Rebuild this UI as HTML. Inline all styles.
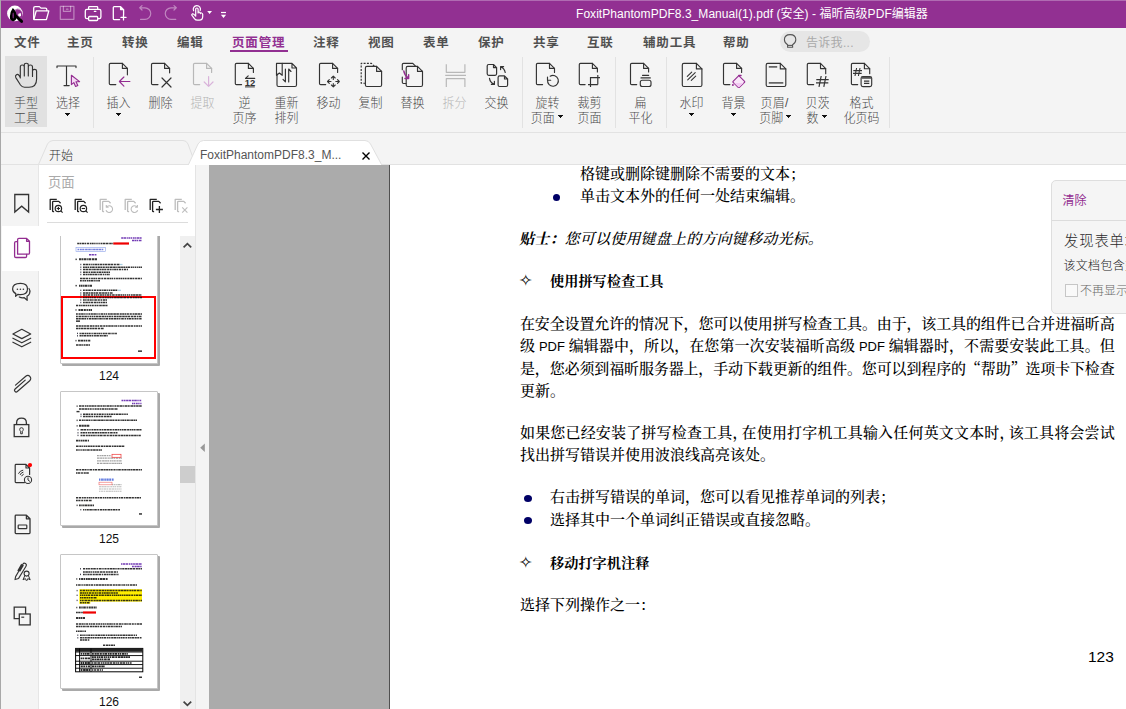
<!DOCTYPE html>
<html lang="zh-CN">
<head>
<meta charset="utf-8">
<title>FoxitPhantomPDF8.3_Manual(1).pdf (安全) - 福昕高级PDF编辑器</title>
<style>
*{box-sizing:border-box;margin:0;padding:0}
html,body{width:1126px;height:709px;overflow:hidden;background:#f4f4f4}
body{position:relative;font-family:"Liberation Sans","Noto Sans CJK SC",sans-serif;font-size:12px;color:#555}
.abs{position:absolute}
svg{position:absolute;overflow:visible}
/* title bar */
#title{position:absolute;left:0;top:0;width:1126px;height:28px;background:#923092;border-top:1px solid #b06bb2}
#title .ttl{position:absolute;left:576px;top:5px;color:#fff;font-size:12px;line-height:16px;white-space:nowrap;letter-spacing:0.05px}
#lborder{position:absolute;left:0;top:0;width:1px;height:709px;background:#a8a8a8;z-index:50}
/* menu */
#menu{position:absolute;left:0;top:28px;width:1126px;height:27px}
#menu span{position:absolute;top:6px;font-size:12.5px;line-height:18px;font-weight:700;color:#505050;white-space:nowrap;letter-spacing:0.85px}
#menu span.act{color:#923092}
/* ribbon */
#ribbon{position:absolute;left:0;top:55px;width:1126px;height:78px;border-bottom:1px solid #e2e2e2}
.rb{transform:scaleY(1.05);transform-origin:50% 0;position:absolute;top:39.8px;width:60px;margin-left:-30px;text-align:center;font-size:12px;line-height:15px;color:#4a4a4a;font-weight:300;white-space:nowrap}
.rb.dis{color:#b4b4b4}
.sep{position:absolute;top:2px;width:1px;height:71px;background:#e2e2e2}
.dd{position:absolute;width:0;height:0;border-left:2.7px solid transparent;border-right:2.7px solid transparent;border-top:3.2px solid #1a1a1a}

/* tab bar */
#tabline{position:absolute;left:0;top:164px;width:1126px;height:1px;background:#e2e2e2}
.tabtxt{position:absolute;top:147px;font-size:12px;line-height:16px;white-space:nowrap}
/* left strip */
#strip{position:absolute;left:1px;top:165px;width:38px;height:544px;background:#f4f4f4;border-right:1px solid #e6e6e6}
#stripact{position:absolute;left:2px;top:226px;width:38px;height:45px;background:#fff}
#panel{position:absolute;left:39px;top:165px;width:156px;height:544px;background:#fff}
#panel .hd{position:absolute;left:9px;top:9px;font-size:13.33px;line-height:18px;color:#aaa}
#panel .ln{position:absolute;left:8px;top:57px;width:141px;height:1px;background:#dcdcdc}
#thumbs{position:absolute;left:0;top:71px;width:141px;height:473px;overflow:hidden}
.th{position:absolute;left:21px;width:98px;height:135px;background:#fff;border:1px solid #c6c6c6;border-radius:1px;box-shadow:2px 2px 0 #a9a9a9}
.thl{position:absolute;left:20px;width:100px;text-align:center;font-size:12px;line-height:14px;color:#111}
#sbar{position:absolute;left:141px;top:71px;width:15px;height:473px;background:#f0f0f0}
#sthumb{position:absolute;left:0;top:230px;width:15px;height:17px;background:#cdcdcd}
#gutter{position:absolute;left:195px;top:165px;width:14px;height:544px;background:#f4f4f4;border-left:1px solid #e4e4e4}
#gray{position:absolute;left:209px;top:165px;width:181px;height:544px;background:#ababab;border-right:1px solid #505050}
#page{position:absolute;left:390px;top:165px;width:736px;height:544px;background:#fff;overflow:hidden;font-family:"Liberation Serif","Noto Serif CJK SC",serif;color:#000;font-size:15px;font-weight:500}
#page .l{position:absolute;white-space:nowrap;line-height:22px;height:22px}
#page .j{text-align:justify;text-align-last:justify;width:594.5px;left:130px;letter-spacing:-0.25px}
#page .bl{position:absolute;width:8px;height:7px;border-radius:50%;background:#000066}
#page .hd{font-weight:700;font-size:14.2px}
#page .en{font-family:"Liberation Sans",sans-serif;font-size:13px;letter-spacing:0}
#page .hc{margin-right:-6px}
#page .cj{font-family:"Noto Serif CJK SC",serif}

#pop{position:absolute;left:1051px;top:180px;width:90px;height:134px;background:#f5f5f5;border:1px solid #dedede;border-radius:5px;font-family:"Liberation Sans","Noto Sans CJK SC",sans-serif;overflow:hidden}
#pop div{position:absolute;white-space:nowrap}
</style>
</head>
<body>
<div id="title">
  <div class="ttl">FoxitPhantomPDF8.3_Manual(1).pdf (安全) - 福昕高级PDF编辑器</div>
</div>
<div id="menu">
  <span style="left:14px">文件</span>
  <span style="left:67px">主页</span>
  <span style="left:122px">转换</span>
  <span style="left:177px">编辑</span>
  <span class="act" style="left:232px">页面管理</span>
  <span style="left:313px">注释</span>
  <span style="left:368px">视图</span>
  <span style="left:423px">表单</span>
  <span style="left:478px">保护</span>
  <span style="left:533px">共享</span>
  <span style="left:587px">互联</span>
  <span style="left:643px">辅助工具</span>
  <span style="left:723px">帮助</span>
  <div class="abs" style="left:230px;top:21.5px;width:58px;height:2.5px;background:#923092"></div>
  <div class="abs" style="left:780px;top:3px;width:90px;height:21px;border-radius:11px;background:#e6e6e6"></div>
  <span style="left:806px;top:6px;font-size:12px;font-weight:400;color:#aaa;letter-spacing:0.3px">告诉我...</span>
</div>
<div id="ribbon">
  <div class="abs" style="left:5px;top:1px;width:42px;height:71px;background:#e1e1e1"></div>
  <div class="rb" style="left:26px">手型<br>工具</div>
  <div class="rb" style="left:68px">选择</div>
  <div class="sep" style="left:93px"></div>
  <div class="rb" style="left:118.5px">插入</div>
  <div class="rb" style="left:160.5px">删除</div>
  <div class="rb dis" style="left:202.5px">提取</div>
  <div class="rb" style="left:244.5px">逆<br>页序</div>
  <div class="rb" style="left:286.5px">重新<br>排列</div>
  <div class="rb" style="left:328.5px">移动</div>
  <div class="rb" style="left:370.5px">复制</div>
  <div class="rb" style="left:412.5px">替换</div>
  <div class="rb dis" style="left:454.5px">拆分</div>
  <div class="rb" style="left:496.5px">交换</div>
  <div class="sep" style="left:522px"></div>
  <div class="rb" style="left:547.5px">旋转</div><div class="rb" style="left:542.8px;top:54.7px">页面</div>
  <div class="rb" style="left:589.5px">裁剪<br>页面</div>
  <div class="sep" style="left:615px"></div>
  <div class="rb" style="left:640.5px">扁<br>平化</div>
  <div class="sep" style="left:666px"></div>
  <div class="rb" style="left:691.5px">水印</div>
  <div class="rb" style="left:733.6px">背景</div>
  <div class="rb" style="left:774.5px;letter-spacing:0.3px">页眉/</div><div class="rb" style="left:771.3px;top:54.7px">页脚</div>
  <div class="rb" style="left:817.5px">贝茨</div><div class="rb" style="left:812.4px;top:54.7px">数</div>
  <div class="rb" style="left:861.5px">格式<br>化页码</div>
  <div class="sep" style="left:889px"></div>
</div>

<!-- tab bar -->
<svg style="left:0;top:139px" width="400" height="27" viewBox="0 0 400 27">
  <path d="M38.5 25.5 L47.5 5 Q49.5 1.5 53 1.5 L183 1.5 Q186.5 1.5 188 5 L195.5 25.5" fill="#f4f4f4" stroke="#e0e0e0" stroke-width="1"/>
  <path d="M188.5 25.5 L198 5 Q200 1.5 203.5 1.5 L365 1.5 Q368.5 1.5 370.5 5 L381.5 25.5 Z" fill="#fff" stroke="#e0e0e0" stroke-width="1"/>
  <path d="M362.5 13.5 L369.5 20.5 M369.5 13.5 L362.5 20.5" stroke="#000" stroke-width="1.4" fill="none"/>
</svg>
<div id="tabline"></div>
<div class="abs" style="left:189px;top:164px;width:192px;height:1px;background:#fff"></div>
<div class="tabtxt" style="left:49px;top:148px;color:#333;font-weight:300">开始</div>
<div class="tabtxt" style="left:200px;color:#555">FoxitPhantomPDF8.3_M...</div>

<div id="strip"></div>
<div id="stripact"></div>
<div id="panel">
  <div class="hd">页面</div>
  <div class="ln"></div>
  <div id="thumbs">
    <div class="th" style="top:-7px"></div>
    <div class="abs" style="left:22px;top:60px;width:95px;height:63px;border:2px solid #f00"></div>
    <div class="thl" style="top:133px">124</div>
    <div class="th" style="top:155px"></div>
    <div class="thl" style="top:296px">125</div>
    <div class="th" style="top:318px"></div>
    <div class="thl" style="top:459px">126</div>
  </div>
  <div id="sbar"><div id="sthumb"></div></div>
</div>
<div id="gutter"></div>
<div id="gray"></div>
<div id="page">
  <div class="l" style="left:190px;top:-2.5px">格键或删除键删除不需要的文本；</div>
  <div class="bl" style="left:163.3px;top:28.7px;width:7px"></div>
  <div class="l" style="left:190px;top:20px">单击文本外的任何一处结束编辑。</div>
  <div class="l" style="left:129px;top:62.5px;font-style:italic;letter-spacing:0.2px"><b>贴士：</b>您可以使用键盘上的方向键移动光标。</div>
  <div class="l hd" style="left:130px;top:104.6px;left:128.7px;font-weight:400;font-size:16.5px;font-family:'DejaVu Sans',sans-serif">✧</div>
  <div class="l hd" style="left:160px;top:105px">使用拼写检查工具</div>
  <div class="l j" style="top:148px">在安全设置允许的情况下，您可以使用拼写检查工具。由于，该工具的组件已合并进福昕高</div>
  <div class="l j" style="top:170px">级 <span class="en">PDF</span> 编辑器中，所以，在您第一次安装福昕高级 <span class="en">PDF</span> 编辑器时，不需要安装此工具。但</div>
  <div class="l j" style="top:192px">是，您必须到福昕服务器上，手动下载更新的组件。您可以到程序的<span class="cj">“</span>帮助<span class="cj">”</span>选项卡下检查</div>
  <div class="l" style="left:130px;top:215px">更新。</div>
  <div class="l j" style="top:257px">如果您已经安装了拼写检查工具<span class="hc">，</span>在使用打字机工具输入任何英文文本时<span class="hc">，</span>该工具将会尝试</div>
  <div class="l" style="left:130px;top:279px">找出拼写错误并使用波浪线高亮该处。</div>
  <div class="bl" style="left:134px;top:330px"></div>
  <div class="l" style="left:160px;top:321px">右击拼写错误的单词，您可以看见推荐单词的列表；</div>
  <div class="bl" style="left:134px;top:352px"></div>
  <div class="l" style="left:160px;top:344px">选择其中一个单词纠正错误或直接忽略。</div>
  <div class="l hd" style="left:130px;top:386.6px;left:128.7px;font-weight:400;font-size:16.5px;font-family:'DejaVu Sans',sans-serif">✧</div>
  <div class="l hd" style="left:160px;top:387px">移动打字机注释</div>
  <div class="l" style="left:130px;top:429px">选择下列操作之一：</div>
  <div class="l" style="left:699px;top:481px;font-family:'Liberation Sans',sans-serif;font-size:15.5px;left:698px">123</div>
</div>
<svg id="rbicons" style="left:0;top:0" width="1126" height="140" viewBox="0 0 1126 140"><g fill="none" stroke="#333" stroke-width="1.15" stroke-linecap="round" stroke-linejoin="round">
<path d="M20.3 78 L20.3 67 Q20.3 65 22.3 65 Q24.3 65 24.3 67 L24.3 76 M24.3 67 L24.3 65 Q24.3 63.2 26.3 63.2 Q28.3 63.2 28.3 65 L28.3 76 M28.3 67 Q28.3 65 30.4 65 Q32.5 65 32.5 67 L32.5 76.5 M32.5 71 Q32.5 69.3 34.6 69.3 Q36.6 69.3 36.6 71 L36.6 79 Q36.6 87.2 29 87.2 L24.5 87.2 Q22 87.2 20.5 85 L15.8 77.6 Q14.9 75.8 16.4 74.7 Q17.8 73.8 19 75.3 L20.3 77.6"/>
<path d="M57 67.6 L57 66 L76 66 L76 67.6 M66.5 66 L66.5 85.6 M64 85.6 L69.2 85.6"/>
<path d="M115.8 84.6 L110.5 84.6 Q109.3 84.6 109.3 83.4 L109.3 64.6 Q109.3 63.4 110.5 63.4 L122.4 63.4 L127.4 68.4 L127.4 74.8"/><path d="M122.4 63.4 L122.4 68.4 L127.4 68.4"/>
<path d="M158.0 84.6 L152.7 84.6 Q151.5 84.6 151.5 83.4 L151.5 64.6 Q151.5 63.4 152.7 63.4 L164.6 63.4 L169.6 68.4 L169.6 72.8"/><path d="M164.6 63.4 L164.6 68.4 L169.6 68.4"/>
<path d="M162 78 L171 87 M171 78 L162 87" stroke-width="1.2"/>
<path d="M241.6 84.6 L236.5 84.6 Q235.3 84.6 235.3 83.4 L235.3 64.6 Q235.3 63.4 236.5 63.4 L248.4 63.4 L253.4 68.4 L253.4 72.5"/><path d="M248.4 63.4 L248.4 68.4 L253.4 68.4"/>
<path d="M254.7 78.4 L245.5 78.4 M248.2 75.8 L245.5 78.4"/>
<path d="M282.2 63.4 L292 63.4 L296.5 68 L296.5 85 Q296.5 86.5 295 86.5 L278.5 86.5 Q277 86.5 277 85 L277 74 M292 63.4 L292 68 L296.5 68"/>
<path d="M276.5 63.4 L282.2 63.4 L282.2 75.3 L279.4 73 L276.5 75.3 Z"/>
<path d="M285.4 69 L285.4 81.8 L283 79.3 M288.7 82 L288.7 69 L291 71.5"/>
<path d="M325.7 84.6 L320.7 84.6 Q319.5 84.6 319.5 83.4 L319.5 64.6 Q319.5 63.4 320.7 63.4 L332.6 63.4 L337.6 68.4 L337.6 72.5"/><path d="M332.6 63.4 L332.6 68.4 L337.6 68.4"/>
<path d="M333.3 76.3 L333.3 79.5 M331.4 78 L333.3 76.2 L335.2 78 M333.3 86.8 L333.3 83.5 M331.4 85 L333.3 86.8 L335.2 85 M327.5 81.5 L331 81.5 M329.3 79.6 L327.5 81.5 L329.3 83.4 M339.3 81.5 L335.8 81.5 M337.5 79.6 L339.3 81.5 L337.5 83.4" stroke-width="1.1"/>
<path d="M365.4 83.2 L361.2 83.2 L361.2 63.4 L371.5 63.4 L374.3 66.2" stroke-dasharray="2 1.3" stroke-linecap="butt"/>
<path d="M366.9 66.4 L376.6 66.4 L381.6 71.4 L381.6 85.0 Q381.6 86.5 380.1 86.5 L366.9 86.5 Q365.4 86.5 365.4 85.0 L365.4 67.9 Q365.4 66.4 366.9 66.4 Z"/><path d="M376.6 66.4 L376.6 71.4 L381.6 71.4"/>
<path d="M402.3 69.7 L402.3 64.6 Q402.3 63.4 403.5 63.4 L412.8 63.4 L415.5 66.2 M402.3 77 L402.3 82.3 Q402.3 83.5 403.5 83.5 L406 83.5"/>
<path d="M407.7 66.4 L417.5 66.4 L422.5 71.4 L422.5 85.0 Q422.5 86.5 421.0 86.5 L407.7 86.5 Q406.2 86.5 406.2 85.0 L406.2 67.9 Q406.2 66.4 407.7 66.4 Z"/><path d="M417.5 66.4 L417.5 71.4 L422.5 71.4"/>
<path d="M488.7 64.5 L493.5 64.5 L496.6 67.6 L496.6 73.8 Q496.6 75.3 495.1 75.3 L488.7 75.3 Q487.2 75.3 487.2 73.8 L487.2 66 Q487.2 64.5 488.7 64.5 Z M493.5 64.5 L493.5 67.6 L496.6 67.6" stroke-width="1.2"/>
<path d="M499.6 75.9 L504.5 75.9 L507.6 79 L507.6 85 Q507.6 86.5 506.1 86.5 L499.6 86.5 Q498.1 86.5 498.1 85 L498.1 77.4 Q498.1 75.9 499.6 75.9 Z M504.5 75.9 L504.5 79 L507.6 79" stroke-width="1.2"/>
<path d="M505.2 72.5 Q504.6 68.5 500.8 66.7 M500.6 69.6 L500.6 66.6 L503.6 66.6 M489.5 78.4 Q490 82.6 494.2 84.3 M494.4 81.3 L494.4 84.4 L491.4 84.4" stroke-width="1.2"/>
<path d="M542.6 84.6 L537.6 84.6 Q536.4 84.6 536.4 83.4 L536.4 64.6 Q536.4 63.4 537.6 63.4 L549.5 63.4 L554.5 68.4 L554.5 72.5"/><path d="M549.5 63.4 L549.5 68.4 L554.5 68.4"/>
<path d="M550.2 76.2 A5.4 5.4 0 1 1 547.6 80.2 M547.5 77 L547.5 80.2 L550.7 80.2"/>
<path d="M585.1 84.6 L580.5 84.6 Q579.3 84.6 579.3 83.4 L579.3 64.6 Q579.3 63.4 580.5 63.4 L592.4 63.4 L597.4 68.4 L597.4 72"/><path d="M592.4 63.4 L592.4 68.4 L597.4 68.4"/>
<path d="M590.5 77 L590.5 86.9 M588 84.6 L597.8 84.6 M590.5 77.6 L600 77.6 M597.8 75 L597.8 84.6" stroke-linecap="butt"/>
<path d="M636.7 84.6 L631.7 84.6 Q630.5 84.6 630.5 83.4 L630.5 64.6 Q630.5 63.4 631.7 63.4 L643.6 63.4 L648.6 68.4 L648.6 72"/><path d="M643.6 63.4 L643.6 68.4 L648.6 68.4"/>
<path d="M642.5 75.3 L648.7 75.3 M641 77.9 L650.3 77.9"/>
<rect x="640.3" y="80.2" width="10.7" height="6.3" rx="2"/>
<path d="M683.8 63.4 L696.4 63.4 L701.9 68.9 L701.9 85.0 Q701.9 86.5 700.4 86.5 L683.8 86.5 Q682.3 86.5 682.3 85.0 L682.3 64.9 Q682.3 63.4 683.8 63.4 Z"/><path d="M696.4 63.4 L696.4 68.9 L701.9 68.9"/>
<path d="M687.3 76.4 L691.7 72.2 M687.7 79.8 L695.2 72.6 M691.3 80.3 L695.7 76.2" stroke-width="1.1"/>
<path d="M729.9 84.6 L724.7 84.6 Q723.5 84.6 723.5 83.4 L723.5 64.6 Q723.5 63.4 724.7 63.4 L736.6 63.4 L741.6 68.4 L741.6 72.5"/><path d="M736.6 63.4 L736.6 68.4 L741.6 68.4"/>
<path d="M767.7 63.4 L780.3 63.4 L785.8 68.9 L785.8 85.0 Q785.8 86.5 784.3 86.5 L767.7 86.5 Q766.2 86.5 766.2 85.0 L766.2 64.9 Q766.2 63.4 767.7 63.4 Z"/><path d="M780.3 63.4 L780.3 68.9 L785.8 68.9"/>
<path d="M768.8 66.8 L777.2 66.8 M768.8 82.9 L783.3 82.9" stroke="#666" stroke-width="1.7" stroke-linecap="butt"/>
<path d="M813.7 84.6 L808.5 84.6 Q807.3 84.6 807.3 83.4 L807.3 64.6 Q807.3 63.4 808.5 63.4 L820.5 63.4 L825.7 68.6 L825.7 73.7"/><path d="M820.5 63.4 L820.5 68.6 L825.7 68.6"/>
<path d="M816.3 79.7 L828.7 79.7 M816 82.9 L828.3 82.9 M821.2 76 L819 86.8 M826 76 L823.8 86.8" stroke-width="1.2" stroke-linecap="butt"/>
<path d="M857.7 84.6 L852.6 84.6 Q851.4 84.6 851.4 83.4 L851.4 64.6 Q851.4 63.4 852.6 63.4 L864.4 63.4 L869.7 68.7 L869.7 73.7"/><path d="M864.4 63.4 L864.4 68.7 L869.7 68.7"/>
<path d="M853.3 70.6 L862 70.6 M853 73.4 L861.7 73.4 M856.6 68 L855 76 M860 68 L858.4 76" stroke-width="1.1" stroke-linecap="butt"/>
<rect x="861.1" y="76.5" width="10.6" height="10.1" rx="1.8" fill="#f4f4f4"/>
<path d="M861.5 77.8 L871.3 77.8" stroke="#555" stroke-width="2" stroke-linecap="butt"/>
<path d="M864 81.1 L869.3 81.1 M864 83.4 L869.3 83.4" stroke-width="1.1" stroke-linecap="butt"/>
</g>
<text x="244.7" y="86.4" font-family="Liberation Sans, sans-serif" font-size="8.3" font-weight="700" fill="#333" textLength="10.5" lengthAdjust="spacingAndGlyphs">12</text>
<path d="M245 86.9 L254.8 86.9" stroke="#333" stroke-width="1" fill="none"/>
<g fill="none" stroke="#b8b8b8" stroke-width="1.2" stroke-linecap="round" stroke-linejoin="round">
<path d="M199.7 84.6 L194.7 84.6 Q193.5 84.6 193.5 83.4 L193.5 64.6 Q193.5 63.4 194.7 63.4 L206.6 63.4 L211.6 68.4 L211.6 72.5"/><path d="M206.6 63.4 L206.6 68.4 L211.6 68.4"/>
<path d="M446.3 64.2 L446.3 72.3 L464.9 72.3 L464.9 64.2 M445.2 75.3 L466 75.3 M446.3 86.9 L446.3 78.7 L464.9 78.7 L464.9 86.9" stroke-linecap="butt"/>
</g>
<path d="M208.6 76.5 L208.6 86.3 M204.2 82 L208.6 86.4 L213 82" fill="none" stroke="#d9b3da" stroke-width="1.2" stroke-linecap="round" stroke-linejoin="round"/>
<g fill="none" stroke="#932d91" stroke-width="1.15" stroke-linecap="round" stroke-linejoin="round">
<path d="M71.4 75.3 L71.4 84.6 L73.8 82.6 L75.6 86.5 L77.8 85.4 L76 81.8 L79.6 81.6 Z" fill="#f3d9f3"/>
<path d="M129.9 81.5 L119.5 81.5 M123.9 77 L119.4 81.5 L123.9 86.1"/>
<path d="M403.8 71 Q404.5 75.5 408.3 78.2 M408.6 74.8 L408.6 78.5 L405 78.5" stroke-width="1.5"/>
<path d="M738.8 75.6 L744.6 81.4 Q745 81.9 744.5 82.4 L739.6 87.2 Q738.8 87.8 738 87.2 L733.1 82.3 Q732.6 81.8 733.1 81.3 Z" fill="#f9e6f9"/>
<path d="M734.2 83 L743.6 83 L738.8 87.4 Z" fill="#f3c9f3" stroke="none"/>
<path d="M738.8 75.6 L741 75.6" stroke-width="1.5"/>
</g>
<circle cx="732.9" cy="85" r="1" fill="#932d91"/>
<g fill="#111" shape-rendering="crispEdges"><rect x="65" y="113" width="5" height="1"/><rect x="66" y="114" width="3" height="1"/><rect x="67" y="115" width="1" height="1"/><rect x="116" y="113" width="5" height="1"/><rect x="117" y="114" width="3" height="1"/><rect x="118" y="115" width="1" height="1"/><rect x="689" y="113" width="5" height="1"/><rect x="690" y="114" width="3" height="1"/><rect x="691" y="115" width="1" height="1"/><rect x="731" y="113" width="5" height="1"/><rect x="732" y="114" width="3" height="1"/><rect x="733" y="115" width="1" height="1"/><rect x="558" y="115" width="5" height="1"/><rect x="559" y="116" width="3" height="1"/><rect x="560" y="117" width="1" height="1"/><rect x="786" y="115" width="5" height="1"/><rect x="787" y="116" width="3" height="1"/><rect x="788" y="117" width="1" height="1"/><rect x="822" y="115" width="5" height="1"/><rect x="823" y="116" width="3" height="1"/><rect x="824" y="117" width="1" height="1"/></g>
<g fill="none" stroke="#555" stroke-width="1.1"><path d="M787.6 44.8 Q784.4 42.8 784.4 39.8 Q784.4 34.6 790.1 34.6 Q795.8 34.6 795.8 39.8 Q795.8 42.8 792.6 44.8 L792.6 47.2 L787.6 47.2 Z"/><path d="M787.6 45.4 L792.6 45.4"/></g>
</svg>

<svg id="tbicons" style="left:0;top:0" width="240" height="28" viewBox="0 0 240 28"><circle cx="14.9" cy="13.4" r="7.8" fill="#fff"/>
<path d="M15.2 9.6 Q18.6 8.4 21.2 11 Q23.4 14.6 21.2 18.8 L15.6 15.2 Z" fill="#923092"/>
<path d="M16.8 8.8 Q19.8 8.6 21.6 11.2" stroke="#923092" stroke-width="0.7" fill="none" opacity="0.7"/>
<path d="M18.2 13.4 L19 14 L19.8 12.9 L20.6 13.6 L21 13 L21 16 Q19.8 16.8 18.4 16.2 Z" fill="#fff"/>
<path d="M12.8 7.9 Q16.7 11 16.5 16.6 Q16.3 21.2 13.1 21.2 Q9.8 21.2 9.9 16.6 Q10 11.6 12.8 7.9 Z" fill="#000"/>
<ellipse cx="13.2" cy="15.6" rx="0.75" ry="3" fill="#7a2a7c"/>
<path d="M15.6 15.8 L21.6 21.4" stroke="#000" stroke-width="2.9" stroke-linecap="round"/>
<g fill="none" stroke="#fff" stroke-width="1.3" stroke-linecap="round" stroke-linejoin="round">
<path d="M33.7 19 L33.7 8 Q33.7 6.6 35.1 6.6 L39.4 6.6 L41 8.1 L45.4 8.1 Q46.8 8.1 46.8 9.5 L46.8 10.6"/>
<path d="M33.9 19.6 L36.2 10.8 L48.8 10.8 L46.4 19.6 Z"/>
<rect x="85.3" y="9.4" width="15.6" height="9.2" rx="1.6"/>
<path d="M88.6 9.4 L88.6 7.4 Q88.6 6.6 89.4 6.6 L96.9 6.6 Q97.7 6.6 97.7 7.4 L97.7 9.4"/>
<rect x="88.6" y="16.5" width="9.1" height="4" rx="0.9" fill="#923092"/>
<path d="M94.3 11.4 L95.9 11.4" stroke-width="1.1"/>
<path d="M119.6 19.6 L114.2 19.6 Q113.3 19.6 113.3 18.7 L113.3 7.5 Q113.3 6.6 114.2 6.6 L120.6 6.6 L123.6 9.6 L123.6 14.4 M120.6 6.6 L120.6 9.6 L123.6 9.6" />
<path d="M121 17.4 L126 17.4 M123.5 14.9 L123.5 19.9"/>
<path d="M193.6 10.8 A3.6 3.6 0 1 1 200.2 10.6" stroke-width="1.2"/>
<path d="M195.7 15.8 L195.7 9.2 Q195.7 8 196.9 8 Q198.1 8 198.1 9.2 L198.1 13 Q198.1 12 199.3 12.2 Q200.3 12.4 200.3 13.6 Q200.4 12.8 201.5 13 Q202.6 13.2 202.7 14.4 L202.7 16.6 Q202.7 20.2 199.4 20.2 L197.4 20.2 Q195.6 20.2 194.4 18.6 L192 15.4 Q191.4 14.4 192.3 13.9 Q193.2 13.5 194 14.4 L195.7 16.2" stroke-width="1.2"/>
</g>
<g fill="none" stroke="rgba(255,255,255,0.42)" stroke-width="1.2" stroke-linecap="round" stroke-linejoin="round">
<rect x="60.3" y="6.4" width="13.6" height="12.9"/>
<path d="M63.4 6.4 L63.4 11.3 L70.6 11.3 L70.6 6.4 M66.5 9.2 L68 9.2"/>
<path d="M140 7.8 L145 7.8 A5.75 5.75 0 0 1 145 19.3 L140.5 19.3 M142 5.6 L139.7 7.8 L142 10"/>
<path d="M176 7.8 L171 7.8 A5.75 5.75 0 0 0 171 19.3 L175.8 19.3 M174 5.6 L176.3 7.8 L174 10"/>
</g>
<path d="M207.2 11 L212 11 L209.6 14 Z" fill="#fff"/>
<path d="M221 12.5 L226 12.5" stroke="#fff" stroke-width="1.2"/>
<path d="M220.9 14.8 L226.1 14.8 L223.5 18 Z" fill="#fff"/></svg>
<svg id="sideicons" style="left:0;top:0" width="215" height="709" viewBox="0 0 215 709"><g fill="none" stroke-width="1.3" stroke-linecap="butt" stroke-linejoin="round">
<path d="M50.2 209.9 L50.2 199.4 L56.8 199.4" stroke="#222"/><path d="M54.1 211.7 L53.4 211.7 Q52.6 211.7 52.6 210.9 L52.6 202.2 Q52.6 201.4 53.4 201.4 L58.8 201.4 L60.6 203.2" stroke="#222"/>
<circle cx="58.4" cy="208.5" r="3.2" stroke="#222" stroke-width="1.2"/><path d="M60.8 210.9 L62.6 212.6" stroke="#222" stroke-width="1.2"/><path d="M56.7 208.5 L60.1 208.5 M58.4 206.8 L58.4 210.2" stroke="#222" stroke-width="1.1"/>
<path d="M75.2 209.9 L75.2 199.4 L81.8 199.4" stroke="#222"/><path d="M79.1 211.7 L78.4 211.7 Q77.6 211.7 77.6 210.9 L77.6 202.2 Q77.6 201.4 78.4 201.4 L83.8 201.4 L85.6 203.2" stroke="#222"/>
<circle cx="83.4" cy="208.5" r="3.2" stroke="#222" stroke-width="1.2"/><path d="M85.8 210.9 L87.6 212.6" stroke="#222" stroke-width="1.2"/><path d="M81.7 208.5 L85.1 208.5" stroke="#222" stroke-width="1.1"/>
<path d="M100.2 209.9 L100.2 199.4 L106.8 199.4" stroke="#bdbdbd"/><path d="M104.1 211.7 L103.4 211.7 Q102.6 211.7 102.6 210.9 L102.6 202.2 Q102.6 201.4 103.4 201.4 L108.8 201.4 L110.6 203.2" stroke="#bdbdbd"/>
<path d="M106.5 207 A3.4 3.4 0 1 1 106 210.3 M106.3 205 L106.3 207.3 L108.6 207.3" stroke="#bdbdbd" stroke-width="1.1"/>
<path d="M125.2 209.9 L125.2 199.4 L131.8 199.4" stroke="#bdbdbd"/><path d="M129.1 211.7 L128.4 211.7 Q127.6 211.7 127.6 210.9 L127.6 202.2 Q127.6 201.4 128.4 201.4 L133.8 201.4 L135.6 203.2" stroke="#bdbdbd"/>
<path d="M137.2 207 A3.4 3.4 0 1 0 137.7 210.3 M137.4 205 L137.4 207.3 L135.1 207.3" stroke="#bdbdbd" stroke-width="1.1"/>
<path d="M150.2 209.9 L150.2 199.4 L156.8 199.4" stroke="#222"/><path d="M154.1 211.7 L153.4 211.7 Q152.6 211.7 152.6 210.9 L152.6 202.2 Q152.6 201.4 153.4 201.4 L158.8 201.4 L160.6 203.2" stroke="#222"/>
<path d="M155.9 209.5 L162.9 209.5 M159.4 206 L159.4 213" stroke="#222" stroke-width="1.3"/>
<path d="M175.2 209.9 L175.2 199.4 L181.8 199.4" stroke="#bdbdbd"/><path d="M179.1 211.7 L178.4 211.7 Q177.6 211.7 177.6 210.9 L177.6 202.2 Q177.6 201.4 178.4 201.4 L183.8 201.4 L185.6 203.2" stroke="#bdbdbd"/>
<path d="M182.2 207.4 L187.4 212.6 M187.4 207.4 L182.2 212.6" stroke="#bdbdbd" stroke-width="1.1"/>
</g>
<g fill="none" stroke="#333" stroke-width="1.3" stroke-linecap="round" stroke-linejoin="round">
<path d="M14.8 194.5 L28.6 194.5 L28.6 212 L21.7 206.2 L14.8 212 Z" stroke-linejoin="miter"/>
<path d="M20.5 283.3 Q27.5 283.3 27.5 289 Q27.5 294.6 20.5 294.6 Q19.2 294.6 18 294.3 L15.6 296.3 L15.8 293.6 Q12.6 292 12.6 289 Q12.6 283.3 20.5 283.3 Z" stroke-width="1.2"/>
<path d="M29 288.5 Q30.6 290.5 29.6 293.4 Q28.8 295.2 27 296.3 L27.2 300.3 L24.3 297.7 Q21.5 298.2 19.3 297" stroke-width="1.2"/>
<circle cx="17.4" cy="289.2" r="0.8" fill="#333" stroke="none"/><circle cx="20.4" cy="289.2" r="0.8" fill="#333" stroke="none"/><circle cx="23.4" cy="289.2" r="0.8" fill="#333" stroke="none"/>
<path d="M21.8 329.3 L30.7 334 L21.8 338.6 L12.9 334 Z M12.9 338.2 L21.8 342.8 L30.7 338.2 M12.9 342.2 L21.8 346.8 L30.7 342.2" stroke-width="1.2"/>
<path d="M5 -3 L18.6 -3 A3 3 0 0 1 18.6 3 L2.2 3 A1.7 1.7 0 0 1 2.2 -0.4 L15.6 -0.4" stroke-width="1.2" transform="translate(13.7,390.7) rotate(-41)"/>
<rect x="14.2" y="424.6" width="14.6" height="12" stroke-linejoin="miter"/>
<path d="M16.6 424.4 L16.6 423 Q16.6 418.2 21.5 418.2 Q26.4 418.2 26.4 423 L26.4 424.4"/>
<path d="M20.7 433.4 L20.7 431.2 Q19.7 430.5 19.7 429.4 Q19.7 427.7 21.5 427.7 Q23.3 427.7 23.3 429.4 Q23.3 430.5 22.3 431.2 L22.3 433.4 Z" stroke-width="1"/>
<path d="M24.5 482.6 L16 482.6 Q15.2 482.6 15.2 481.8 L15.2 465.2 Q15.2 464.4 16 464.4 L26 464.4 L29.6 468 L29.6 474.5 M26 464.4 L26 468 L29.6 468" stroke-width="1.2"/>
<path d="M18.6 473.4 Q19.8 470.6 22.8 470.2 M20.2 474.6 Q21 472.6 23 472.2 M21.8 475.8 Q22.2 474.6 23.3 474.3" stroke-width="1"/>
<circle cx="28" cy="479.9" r="3.6" fill="#f4f4f4" stroke-width="1.1"/><path d="M28 477.8 L28 480 L29.6 481.2" stroke-width="1"/>
<path d="M16 515.2 L26.4 515.2 L30 518.8 L30 532.8 Q30 533.6 29.2 533.6 L16 533.6 Q15.2 533.6 15.2 532.8 L15.2 516 Q15.2 515.2 16 515.2 Z M26.4 515.2 L26.4 518.8 L30 518.8"/>
<rect x="18.2" y="525" width="8.6" height="3.6" rx="0.6" stroke-width="1.2"/>
<path d="M15 579.6 L15.6 576.6 L22.8 564.2 Q23.8 562.6 25.4 563.5 Q27 564.5 26 566.2 L18.6 578.4 L15 579.6 Z M21.4 564.4 L18 570.4 M23.2 565.4 L20 571" stroke-width="1.1"/>
<circle cx="26.6" cy="573.6" r="2.5" stroke-width="1.1"/><path d="M24.8 575.6 L23 579.8 L25.4 578.6 L26.2 580.4 M28.4 575.6 L30.2 579.8 L27.8 578.6 L27 580.4" stroke-width="1"/>
<path d="M19.3 618.6 L14.2 618.6 L14.2 607.2 L25.6 607.2 L25.6 614" stroke-linejoin="miter" stroke-linecap="butt"/>
<rect x="19.3" y="614" width="10.9" height="10.9" stroke-linejoin="miter"/>
<path d="M21.3 617.2 L24.2 617.2" stroke-width="1.2" stroke-linecap="butt"/>
</g>
<circle cx="30" cy="465.1" r="2.1" fill="#f00"/>
<g fill="none" stroke="#932d91" stroke-width="1.3" stroke-linejoin="round" stroke-linecap="round">
<path d="M17.6 254.2 L17.6 239.7 Q17.6 238.4 18.9 238.4 L26.6 238.4 L29.5 241.3 L29.5 252.9 Q29.5 254.2 28.2 254.2 Z M26.6 238.4 L26.6 241.3 L29.5 241.3"/>
<path d="M17.4 241.6 L15.9 241.6 Q14.6 241.6 14.6 242.9 L14.6 256.2 Q14.6 257.5 15.9 257.5 L25.3 257.5 Q26.6 257.5 26.6 256.2 L26.6 254.4"/>
</g>
<path d="M204.8 443.4 L204.8 452 L200.2 447.7 Z" fill="#999"/>
<path d="M183.6 247.4 L187.4 243.6 L191.2 247.4" fill="none" stroke="#444" stroke-width="1.7"/>
<path d="M183.6 701.6 L187.4 705.4 L191.2 701.6" fill="none" stroke="#444" stroke-width="1.7"/></svg>
<svg id="thumbtxt" style="left:0;top:236px" width="180" height="473" viewBox="0 236 180 473"><path d="M121.2 237.9 H141.6" stroke="#5a1aa8" stroke-width="1.5" stroke-dasharray="2.2 0.4 2.6 0.7 1.4 0.4 1.4 0.5 1.4 0.7 1.8 0.4 1.4 0.5 2.6 0.4 1.8 0.4" opacity="0.85" fill="none"/>
<path d="M132.0 240.6 H141.6" stroke="#5a1aa8" stroke-width="1.5" stroke-dasharray="2.6 0.4 1.4 0.4 1.4 0.7 2.6 0.4" opacity="0.85" fill="none"/>
<path d="M77.2 243.5 H113.3" stroke="#111" stroke-width="1.5" stroke-dasharray="1.8 0.4 1.8 0.5 2.6 0.4 1.4 0.7 2.2 0.7 1.8 0.4 1.8 0.5 1.4 0.7 1.4 0.7 1.4 0.7 1.8 0.5 2.6 0.5 2.6 0.7 2.6 0.5 2.2 0.4" opacity="0.85" fill="none"/>
<rect x="113.3" y="242.4" width="15.7" height="2.2" fill="#e00" opacity="1"/>
<rect x="76" y="247.6" width="29.4" height="3.8" fill="none" stroke="#8aa0e8" stroke-width="0.6"/>
<path d="M77.5 249.5 H104.0" stroke="#3a4ad0" stroke-width="1.4" stroke-dasharray="1.8 0.7 1.8 0.4 2.2 0.7 2.6 0.5 2.6 0.5 1.4 0.4 2.6 0.4 2.2 0.4 2.6 0.5 1.4 0.7 1.4 0.7" opacity="0.7" fill="none"/>
<path d="M89.0 254.8 H96.4" stroke="#5a1aa8" stroke-width="1.4" stroke-dasharray="2.2 0.5 2.2 0.7 2.6 0.7" opacity="0.85" fill="none"/>
<rect x="75.5" y="258.6" width="1.3" height="1.5" fill="#111" opacity="0.85"/>
<path d="M79.0 259.3 H97.0" stroke="#111" stroke-width="1.9" stroke-dasharray="2.6 0.4 1.4 0.5 2.6 0.7 1.4 0.4 2.2 0.7 2.6 0.5 2.6 0.7" opacity="0.85" fill="none"/>
<path d="M83.0 264.5 H120.0" stroke="#111" stroke-width="1.5" stroke-dasharray="2.2 0.4 2.6 0.5 1.8 0.7 1.4 0.5 1.4 0.4 2.2 0.4 1.8 0.5 2.6 0.5 1.4 0.4 2.6 0.5 2.2 0.4 2.6 0.7 2.2 0.7 2.6 0.5 2.6 0.4" opacity="0.85" fill="none"/>
<rect x="80.3" y="263.8" width="1.0" height="1.4" fill="#223" opacity="0.85"/>
<path d="M83.0 267.2 H142.0" stroke="#111" stroke-width="1.5" stroke-dasharray="1.8 0.4 1.8 0.4 1.8 0.7 1.8 0.4 2.6 0.7 1.8 0.5 2.2 0.4 1.8 0.5 2.2 0.7 2.2 0.4 1.4 0.5 2.6 0.5 2.6 0.5 1.4 0.5 2.6 0.4 1.8 0.4 1.8 0.5 1.8 0.4 2.2 0.7 1.4 0.4 1.4 0.7 1.8 0.7 1.4 0.5 1.4 0.4 1.8 0.7" opacity="0.85" fill="none"/>
<rect x="80.3" y="266.5" width="1.0" height="1.4" fill="#223" opacity="0.85"/>
<path d="M83.0 269.5 H128.0" stroke="#111" stroke-width="1.5" stroke-dasharray="2.6 0.4 2.2 0.5 2.2 0.5 1.4 0.4 2.6 0.5 2.6 0.5 2.2 0.4 1.8 0.4 2.2 0.7 2.2 0.5 1.8 0.7 1.4 0.4 2.2 0.4 1.4 0.7 2.2 0.7 1.4 0.7 2.2 0.7 2.2 0.4" opacity="0.85" fill="none"/>
<rect x="80.3" y="268.8" width="1.0" height="1.4" fill="#223" opacity="0.85"/>
<path d="M83.0 272.2 H110.0" stroke="#111" stroke-width="1.5" stroke-dasharray="2.2 0.4 2.2 0.7 1.8 0.7 1.8 0.4 2.6 0.7 1.8 0.4 2.6 0.5 1.4 0.4 2.2 0.5 2.2 0.4 2.2 0.5" opacity="0.85" fill="none"/>
<rect x="80.3" y="271.5" width="1.0" height="1.4" fill="#223" opacity="0.85"/>
<path d="M83.0 274.5 H110.0" stroke="#111" stroke-width="1.5" stroke-dasharray="2.2 0.5 1.4 0.4 1.4 0.4 2.6 0.4 2.2 0.4 2.6 0.7 1.4 0.5 2.2 0.7 1.4 0.7 1.4 0.5 1.8 0.5 1.8 0.5" opacity="0.85" fill="none"/>
<rect x="80.3" y="273.8" width="1.0" height="1.4" fill="#223" opacity="0.85"/>
<rect x="120.0" y="263.9" width="2.5" height="1.2" fill="#6ac" opacity="0.6"/>
<path d="M80.0 278.5 H142.0" stroke="#111" stroke-width="1.5" stroke-dasharray="2.2 0.4 2.6 0.5 2.6 0.7 1.4 0.7 1.8 0.4 1.8 0.4 1.8 0.7 2.6 0.7 1.8 0.7 2.6 0.7 2.2 0.4 1.8 0.4 1.4 0.7 1.4 0.7 1.8 0.5 1.8 0.4 1.4 0.5 1.8 0.5 1.8 0.7 2.2 0.5 2.6 0.4 1.4 0.7 2.2 0.5 2.6 0.7 1.8 0.7" opacity="0.85" fill="none"/>
<path d="M80.0 280.8 H100.0" stroke="#111" stroke-width="1.5" stroke-dasharray="1.8 0.7 1.4 0.5 1.8 0.7 1.4 0.4 1.8 0.4 2.6 0.7 1.4 0.7 1.4 0.5 2.6 0.4" opacity="0.85" fill="none"/>
<rect x="75.5" y="284.9" width="1.3" height="1.5" fill="#111" opacity="0.85"/>
<path d="M79.0 285.7 H92.0" stroke="#111" stroke-width="1.9" stroke-dasharray="1.4 0.4 1.8 0.5 1.4 0.4 2.6 0.7 1.4 0.4 2.6 0.5" opacity="0.85" fill="none"/>
<path d="M83.0 290.3 H118.0" stroke="#111" stroke-width="1.5" stroke-dasharray="1.8 0.7 2.2 0.5 2.6 0.7 1.8 0.7 2.2 0.7 1.8 0.5 1.8 0.5 1.4 0.5 2.6 0.5 1.4 0.7 1.8 0.5 1.4 0.4 2.2 0.4 1.8 0.7 2.2 0.4" opacity="0.85" fill="none"/>
<rect x="80.3" y="289.6" width="1.0" height="1.4" fill="#223" opacity="0.85"/>
<path d="M83.0 293.0 H113.0" stroke="#111" stroke-width="1.5" stroke-dasharray="2.2 0.4 2.6 0.4 1.4 0.5 2.6 0.4 1.8 0.4 2.6 0.7 2.6 0.5 2.6 0.4 2.2 0.5 1.4 0.7 2.2 0.4 2.2 0.7" opacity="0.85" fill="none"/>
<rect x="80.3" y="292.3" width="1.0" height="1.4" fill="#223" opacity="0.85"/>
<path d="M83.0 295.0 H142.0" stroke="#111" stroke-width="1.5" stroke-dasharray="2.6 0.5 1.4 0.5 2.2 0.7 2.2 0.7 1.4 0.4 1.8 0.4 1.4 0.5 2.2 0.4 1.8 0.5 1.8 0.5 2.2 0.5 1.8 0.7 2.6 0.7 2.2 0.4 2.2 0.4 1.8 0.5 1.4 0.5 1.4 0.7 1.4 0.5 1.4 0.7 1.8 0.4 2.2 0.4 2.6 0.4 2.2 0.7 2.6 0.5" opacity="0.85" fill="none"/>
<rect x="80.3" y="294.3" width="1.0" height="1.4" fill="#223" opacity="0.85"/>
<path d="M83.0 297.5 H142.0" stroke="#111" stroke-width="1.5" stroke-dasharray="1.8 0.4 1.8 0.4 1.8 0.5 1.4 0.4 1.8 0.5 2.2 0.7 1.8 0.5 2.6 0.7 1.8 0.5 2.2 0.4 2.2 0.4 1.4 0.4 1.8 0.7 2.6 0.4 2.6 0.4 2.6 0.7 2.6 0.7 2.6 0.7 2.2 0.7 1.8 0.4 2.2 0.4 1.8 0.5 2.2 0.4" opacity="0.85" fill="none"/>
<rect x="80.3" y="296.8" width="1.0" height="1.4" fill="#223" opacity="0.85"/>
<path d="M83.0 300.0 H107.0" stroke="#111" stroke-width="1.5" stroke-dasharray="1.8 0.4 1.4 0.7 2.2 0.5 1.8 0.4 1.4 0.7 2.6 0.7 2.2 0.7 1.8 0.7 2.2 0.4 2.6 0.4" opacity="0.85" fill="none"/>
<rect x="80.3" y="299.3" width="1.0" height="1.4" fill="#223" opacity="0.85"/>
<path d="M83.0 302.5 H107.0" stroke="#111" stroke-width="1.5" stroke-dasharray="1.8 0.5 2.6 0.4 2.2 0.5 2.2 0.7 2.2 0.4 1.4 0.5 1.8 0.5 1.8 0.4 2.2 0.5 1.4 0.5" opacity="0.85" fill="none"/>
<rect x="80.3" y="301.8" width="1.0" height="1.4" fill="#223" opacity="0.85"/>
<rect x="118.0" y="289.7" width="3.0" height="1.2" fill="#6ac" opacity="0.6"/>
<path d="M76.0 305.6 H108.0" stroke="#111" stroke-width="1.5" stroke-dasharray="2.2 0.7 1.8 0.4 1.4 0.4 2.2 0.4 1.8 0.5 1.4 0.5 1.4 0.5 2.2 0.7 1.8 0.4 1.8 0.7 2.6 0.5 2.6 0.4 2.2 0.7" opacity="0.85" fill="none"/>
<rect x="75.5" y="309.2" width="1.0" height="1.5" fill="#111" opacity="0.85"/>
<path d="M78.5 310.0 H92.0" stroke="#111" stroke-width="1.9" stroke-dasharray="1.8 0.4 2.6 0.7 1.8 0.7 1.4 0.7 1.8 0.4 1.4 0.4" opacity="0.85" fill="none"/>
<path d="M76.0 314.0 H142.0" stroke="#111" stroke-width="1.5" stroke-dasharray="1.8 0.7 2.2 0.4 2.6 0.5 1.4 0.7 1.4 0.7 1.8 0.5 2.2 0.4 2.6 0.4 1.4 0.7 1.4 0.7 2.6 0.5 1.4 0.5 1.8 0.7 1.8 0.4 2.6 0.5 2.6 0.4 2.6 0.7 2.2 0.4 1.8 0.4 1.8 0.5 2.2 0.7 2.2 0.7 1.8 0.4 2.6 0.4 2.6 0.5 1.4 0.7" opacity="0.85" fill="none"/>
<path d="M76.0 316.4 H142.0" stroke="#111" stroke-width="1.5" stroke-dasharray="1.8 0.7 2.6 0.5 2.2 0.5 2.6 0.5 1.4 0.7 1.8 0.5 1.4 0.5 1.4 0.5 2.6 0.4 2.6 0.5 2.6 0.4 1.8 0.4 1.4 0.4 2.2 0.5 1.8 0.7 2.2 0.4 2.2 0.4 2.6 0.5 2.6 0.4 1.8 0.4 2.6 0.7 2.6 0.5 2.2 0.7 1.8 0.5 2.2 0.5 2.2 0.4" opacity="0.85" fill="none"/>
<path d="M76.0 318.8 H142.0" stroke="#111" stroke-width="1.5" stroke-dasharray="2.2 0.4 2.2 0.5 2.6 0.4 1.8 0.7 1.4 0.7 2.2 0.5 2.2 0.4 2.6 0.5 1.4 0.5 2.6 0.5 1.4 0.5 1.4 0.4 2.2 0.7 1.8 0.4 2.2 0.5 2.2 0.4 2.2 0.5 1.4 0.7 2.6 0.7 1.8 0.7 1.4 0.4 2.6 0.5 1.8 0.7 2.2 0.5 1.4 0.7 1.8 0.4 2.6 0.5" opacity="0.85" fill="none"/>
<rect x="76.0" y="320.4" width="4.0" height="1.5" fill="#111" opacity="0.85"/>
<path d="M76.0 326.0 H142.0" stroke="#111" stroke-width="1.5" stroke-dasharray="2.2 0.5 2.2 0.5 2.2 0.5 1.8 0.5 2.6 0.7 2.6 0.4 1.8 0.7 1.8 0.4 1.8 0.7 2.6 0.7 1.8 0.5 2.2 0.5 2.6 0.4 1.8 0.4 1.4 0.4 2.2 0.7 1.4 0.5 1.8 0.5 2.2 0.7 1.8 0.4 2.6 0.5 2.6 0.7 1.8 0.5 2.2 0.5 1.4 0.5 2.2 0.7" opacity="0.85" fill="none"/>
<path d="M76.0 328.4 H104.0" stroke="#111" stroke-width="1.5" stroke-dasharray="2.2 0.4 1.8 0.4 2.2 0.4 2.6 0.5 2.6 0.5 2.2 0.4 1.8 0.4 2.6 0.7 2.6 0.7 2.6 0.4" opacity="0.85" fill="none"/>
<path d="M79.5 333.4 H117.0" stroke="#111" stroke-width="1.5" stroke-dasharray="1.4 0.5 2.6 0.5 1.8 0.4 1.8 0.4 1.8 0.7 1.4 0.7 2.6 0.4 1.4 0.4 1.8 0.4 1.4 0.7 2.2 0.4 2.2 0.7 2.6 0.7 1.4 0.4 1.4 0.5 1.8 0.5" opacity="0.85" fill="none"/>
<rect x="77.0" y="332.7" width="1.0" height="1.4" fill="#223" opacity="0.85"/>
<path d="M79.5 335.8 H108.0" stroke="#111" stroke-width="1.5" stroke-dasharray="2.2 0.4 1.4 0.4 2.2 0.5 2.2 0.5 1.8 0.5 1.8 0.7 1.8 0.4 2.6 0.7 2.2 0.4 1.4 0.4 2.6 0.7 2.6 0.4" opacity="0.85" fill="none"/>
<rect x="77.0" y="335.1" width="1.0" height="1.4" fill="#223" opacity="0.85"/>
<rect x="75.5" y="339.9" width="1.0" height="1.5" fill="#111" opacity="0.85"/>
<path d="M78.0 340.6 H91.0" stroke="#111" stroke-width="1.9" stroke-dasharray="2.2 0.4 2.6 0.5 1.8 0.5 1.4 0.7 2.2 0.7" opacity="0.85" fill="none"/>
<path d="M76.0 345.0 H90.0" stroke="#111" stroke-width="1.5" stroke-dasharray="2.6 0.5 2.6 0.4 1.4 0.5 1.4 0.4 2.6 0.4 2.2 0.4" opacity="0.85" fill="none"/>
<rect x="138.0" y="350.4" width="4.0" height="1.5" fill="#111" opacity="0.85"/>
<path d="M121.5 400.6 H141.5" stroke="#5a1aa8" stroke-width="1.5" stroke-dasharray="1.8 0.5 1.8 0.5 2.2 0.4 2.6 0.7 1.8 0.4 2.6 0.5 1.4 0.7 1.8 0.5" opacity="0.85" fill="none"/>
<path d="M132.0 403.5 H141.5" stroke="#5a1aa8" stroke-width="1.5" stroke-dasharray="1.4 0.4 1.4 0.7 1.8 0.5 1.4 0.7 1.4 0.4" opacity="0.85" fill="none"/>
<path d="M79.0 406.1 H142.0" stroke="#111" stroke-width="1.5" stroke-dasharray="2.6 0.5 2.2 0.7 1.4 0.4 1.8 0.5 1.8 0.4 2.6 0.4 2.2 0.7 2.6 0.5 2.2 0.5 1.8 0.4 1.4 0.4 2.2 0.4 2.2 0.5 1.4 0.7 1.8 0.5 2.2 0.5 2.6 0.4 1.4 0.7 2.6 0.4 2.2 0.7 2.6 0.4 2.2 0.5 2.6 0.4 2.6 0.4" opacity="0.85" fill="none"/>
<rect x="76.6" y="405.4" width="1.0" height="1.5" fill="#111" opacity="0.85"/>
<path d="M79.0 409.0 H118.0" stroke="#111" stroke-width="1.5" stroke-dasharray="2.6 0.4 2.6 0.4 2.6 0.4 1.4 0.5 1.8 0.7 1.4 0.7 2.2 0.5 2.2 0.5 1.4 0.5 2.2 0.5 2.2 0.4 1.4 0.4 1.8 0.4 2.6 0.7 2.6 0.5 2.2 0.5" opacity="0.85" fill="none"/>
<rect x="76.5" y="410.9" width="3.0" height="1.4" fill="#111" opacity="0.85"/>
<path d="M83.0 414.3 H128.0" stroke="#111" stroke-width="1.5" stroke-dasharray="2.6 0.4 2.6 0.4 1.4 0.7 2.2 0.7 1.8 0.7 1.8 0.5 2.2 0.5 2.2 0.7 1.4 0.7 1.8 0.5 1.8 0.4 2.6 0.4 1.4 0.5 2.2 0.4 2.6 0.4 1.4 0.5 1.4 0.4 1.4 0.5 2.6 0.7" opacity="0.85" fill="none"/>
<rect x="80.5" y="413.6" width="1.0" height="1.4" fill="#223" opacity="0.85"/>
<path d="M83.0 416.4 H112.0" stroke="#111" stroke-width="1.5" stroke-dasharray="2.6 0.4 1.8 0.4 2.6 0.5 1.8 0.7 1.4 0.5 2.2 0.5 2.2 0.5 2.2 0.7 2.2 0.4 2.6 0.4 1.8 0.4 1.8 0.4" opacity="0.85" fill="none"/>
<rect x="80.5" y="415.7" width="1.0" height="1.4" fill="#223" opacity="0.85"/>
<path d="M79.0 420.3 H137.0" stroke="#111" stroke-width="1.5" stroke-dasharray="2.2 0.7 1.8 0.5 1.4 0.5 2.2 0.4 1.8 0.7 1.4 0.7 2.6 0.4 1.4 0.4 2.6 0.4 2.6 0.5 1.4 0.5 1.8 0.4 1.4 0.4 1.8 0.4 2.2 0.7 1.8 0.5 2.2 0.7 1.4 0.4 2.2 0.4 1.4 0.5 2.2 0.4 1.4 0.4 2.2 0.4 1.8 0.4 2.2 0.5" opacity="0.85" fill="none"/>
<rect x="76.6" y="419.6" width="1.0" height="1.5" fill="#111" opacity="0.85"/>
<rect x="76.6" y="425.1" width="1.0" height="1.5" fill="#111" opacity="0.85"/>
<path d="M79.0 425.8 H90.0" stroke="#111" stroke-width="1.9" stroke-dasharray="2.2 0.4 2.2 0.4 1.8 0.4 2.6 0.7 2.6 0.4" opacity="0.85" fill="none"/>
<path d="M80.5 429.8 H142.0" stroke="#111" stroke-width="1.5" stroke-dasharray="2.6 0.4 2.6 0.7 1.8 0.7 1.4 0.7 1.8 0.5 2.2 0.5 2.2 0.7 2.2 0.5 1.4 0.5 2.2 0.5 2.6 0.4 2.2 0.7 1.8 0.5 2.6 0.4 1.4 0.5 1.8 0.5 1.4 0.4 2.6 0.7 2.2 0.5 1.8 0.4 1.4 0.4 1.8 0.7 2.6 0.4 2.2 0.7" opacity="0.85" fill="none"/>
<rect x="77.5" y="429.1" width="1.0" height="1.4" fill="#223" opacity="0.85"/>
<path d="M80.5 432.8 H118.0" stroke="#111" stroke-width="1.5" stroke-dasharray="1.8 0.4 2.2 0.5 1.8 0.7 1.8 0.4 1.4 0.5 2.6 0.4 2.2 0.4 1.4 0.5 2.2 0.4 2.6 0.4 1.8 0.7 1.8 0.7 2.6 0.7 1.8 0.5 1.8 0.7" opacity="0.85" fill="none"/>
<rect x="77.5" y="432.1" width="1.0" height="1.4" fill="#223" opacity="0.85"/>
<path d="M80.5 435.4 H141.0" stroke="#111" stroke-width="1.5" stroke-dasharray="1.8 0.4 2.6 0.7 1.8 0.5 2.2 0.4 1.8 0.4 1.8 0.4 1.4 0.7 2.2 0.4 2.6 0.7 2.6 0.7 2.2 0.7 2.6 0.5 1.8 0.5 2.6 0.7 2.2 0.5 2.6 0.4 1.4 0.4 2.6 0.5 1.8 0.5 2.6 0.4 2.6 0.5 1.4 0.4 1.8 0.5" opacity="0.85" fill="none"/>
<rect x="77.5" y="434.7" width="1.0" height="1.4" fill="#223" opacity="0.85"/>
<path d="M76.0 440.6 H89.0" stroke="#111" stroke-width="1.9" stroke-dasharray="2.6 0.5 1.4 0.5 1.4 0.4 1.8 0.4 2.2 0.7 1.4 0.4" opacity="0.85" fill="none"/>
<path d="M76.0 446.2 H125.0" stroke="#111" stroke-width="1.5" stroke-dasharray="2.6 0.7 1.8 0.4 1.4 0.7 1.4 0.4 1.8 0.5 2.2 0.4 1.8 0.4 2.2 0.7 2.2 0.4 2.2 0.7 2.2 0.5 1.8 0.5 2.6 0.4 2.2 0.7 1.8 0.5 2.2 0.4 1.8 0.4 2.6 0.4 2.2 0.7 2.2 0.5" opacity="0.85" fill="none"/>
<path d="M76.0 449.9 H102.0" stroke="#111" stroke-width="1.5" stroke-dasharray="1.8 0.5 1.4 0.7 1.4 0.7 2.2 0.5 1.4 0.5 2.6 0.7 2.2 0.5 2.6 0.5 1.8 0.5 2.2 0.4 2.6 0.4" opacity="0.85" fill="none"/>
<path d="M97.0 455.6 H111.0" stroke="#777" stroke-width="1.2" stroke-dasharray="1.8 0.7 1.4 0.5 2.2 0.5 2.2 0.7 1.4 0.7 1.4 0.4 1.8 0.5" opacity="0.7" fill="none"/>
<path d="M97.0 458.2 H122.0" stroke="#777" stroke-width="1.2" stroke-dasharray="2.6 0.5 2.2 0.4 1.8 0.5 1.8 0.7 1.4 0.4 1.4 0.4 2.2 0.5 1.4 0.7 2.2 0.7 1.8 0.5 2.2 0.7" opacity="0.7" fill="none"/>
<path d="M97.0 460.8 H122.0" stroke="#777" stroke-width="1.2" stroke-dasharray="1.8 0.4 2.2 0.7 2.6 0.4 1.8 0.4 1.8 0.7 1.8 0.5 1.4 0.4 1.8 0.7 2.2 0.5 2.2 0.4 1.4 0.7" opacity="0.7" fill="none"/>
<path d="M97.0 463.4 H122.0" stroke="#777" stroke-width="1.2" stroke-dasharray="2.2 0.7 2.6 0.7 2.6 0.4 1.8 0.4 1.4 0.4 1.4 0.5 1.8 0.4 1.8 0.4 1.4 0.4 1.8 0.4 2.6 0.4" opacity="0.7" fill="none"/>
<rect x="112" y="454.3" width="9" height="3" fill="none" stroke="#e33" stroke-width="0.7"/>
<path d="M76.0 469.7 H142.0" stroke="#111" stroke-width="1.5" stroke-dasharray="2.6 0.7 1.8 0.7 2.2 0.4 2.2 0.7 1.4 0.7 2.6 0.7 1.4 0.5 2.6 0.7 2.6 0.4 2.6 0.4 1.8 0.4 2.2 0.4 1.4 0.4 2.2 0.7 2.2 0.7 1.4 0.5 2.6 0.7 2.2 0.5 1.8 0.4 1.4 0.4 2.2 0.4 1.8 0.4 2.2 0.4 2.6 0.5 1.8 0.5 2.6 0.5" opacity="0.85" fill="none"/>
<path d="M76.0 473.0 H89.0" stroke="#111" stroke-width="1.5" stroke-dasharray="1.4 0.4 2.6 0.7 1.8 0.7 2.2 0.4 2.6 0.7" opacity="0.85" fill="none"/>
<path d="M99.0 479.6 H114.0" stroke="#3a5ad8" stroke-width="2.2" stroke-dasharray="1.4 0.7 1.8 0.4 1.4 0.4 1.4 0.4 1.8 0.5 1.8 0.7 1.4 0.4 1.4 0.4" opacity="0.8" fill="none"/>
<rect x="99" y="482.2" width="13" height="2.6" fill="none" stroke="#e66" stroke-width="0.6"/>
<path d="M112.0 484.6 H121.5" stroke="#888" stroke-width="1.1" stroke-dasharray="1.4 0.7 1.4 0.7 1.4 0.4 2.2 0.4 1.4 0.7" opacity="0.6" fill="none"/>
<path d="M99.0 486.8 H121.5" stroke="#888" stroke-width="1.1" stroke-dasharray="2.6 0.4 1.8 0.4 1.8 0.4 1.4 0.4 1.4 0.7 2.2 0.5 1.4 0.4 1.4 0.7 1.8 0.5 2.2 0.5" opacity="0.6" fill="none"/>
<path d="M99.0 489.0 H121.5" stroke="#888" stroke-width="1.1" stroke-dasharray="2.6 0.5 1.4 0.5 2.2 0.5 1.4 0.7 2.2 0.5 2.6 0.5 1.4 0.5 1.4 0.5 1.4 0.5 2.6 0.7" opacity="0.6" fill="none"/>
<path d="M99.0 491.2 H121.5" stroke="#888" stroke-width="1.1" stroke-dasharray="1.4 0.7 1.8 0.7 1.4 0.7 2.2 0.4 2.6 0.4 1.8 0.5 1.4 0.4 2.2 0.5 1.4 0.5 1.8 0.5" opacity="0.6" fill="none"/>
<path d="M76.0 497.7 H141.0" stroke="#111" stroke-width="1.5" stroke-dasharray="2.2 0.7 2.2 0.7 1.8 0.5 1.8 0.7 1.8 0.5 1.8 0.4 1.4 0.5 1.4 0.7 2.2 0.5 1.4 0.5 2.6 0.7 1.4 0.5 1.4 0.5 1.8 0.5 2.2 0.5 1.8 0.5 1.8 0.5 1.8 0.7 1.4 0.5 2.2 0.7 1.8 0.5 2.2 0.4 2.6 0.5 2.2 0.7 1.8 0.4 2.2 0.5 1.8 0.7" opacity="0.85" fill="none"/>
<path d="M76.0 500.6 H92.0" stroke="#111" stroke-width="1.5" stroke-dasharray="1.8 0.5 2.2 0.7 1.8 0.7 1.8 0.4 2.2 0.7 2.2 0.4 1.8 0.5" opacity="0.85" fill="none"/>
<rect x="76.6" y="504.6" width="1.0" height="1.5" fill="#111" opacity="0.85"/>
<path d="M79.0 505.4 H94.0" stroke="#111" stroke-width="1.9" stroke-dasharray="1.8 0.5 1.4 0.4 1.4 0.4 2.6 0.4 1.8 0.5 2.2 0.5 2.2 0.4" opacity="0.85" fill="none"/>
<path d="M83.0 509.7 H120.0" stroke="#111" stroke-width="1.5" stroke-dasharray="1.4 0.7 1.4 0.5 1.8 0.5 2.6 0.4 1.4 0.5 2.6 0.7 1.8 0.7 2.2 0.5 1.4 0.4 2.2 0.7 2.6 0.4 1.8 0.5 2.6 0.4 1.8 0.7 1.8 0.7" opacity="0.85" fill="none"/>
<rect x="80.3" y="509.0" width="1.0" height="1.4" fill="#223" opacity="0.85"/>
<rect x="139.0" y="513.2" width="3.0" height="1.5" fill="#111" opacity="0.85"/>
<path d="M121.0 564.0 H142.0" stroke="#5a1aa8" stroke-width="1.5" stroke-dasharray="1.4 0.5 2.6 0.5 2.2 0.7 1.4 0.5 1.8 0.5 1.8 0.5 2.6 0.5 2.6 0.4 2.6 0.7" opacity="0.85" fill="none"/>
<path d="M132.0 566.5 H142.0" stroke="#5a1aa8" stroke-width="1.5" stroke-dasharray="1.8 0.7 2.2 0.4 2.6 0.5 1.4 0.4" opacity="0.85" fill="none"/>
<path d="M83.0 568.8 H142.0" stroke="#111" stroke-width="1.5" stroke-dasharray="2.2 0.7 1.8 0.4 1.8 0.7 2.2 0.4 2.6 0.7 1.8 0.7 2.6 0.7 1.4 0.7 2.2 0.7 2.2 0.5 2.6 0.4 1.8 0.5 1.4 0.7 2.2 0.7 1.4 0.5 2.2 0.5 2.6 0.4 1.4 0.4 2.6 0.5 2.2 0.7 2.2 0.4 1.8 0.5 2.6 0.7" opacity="0.85" fill="none"/>
<path d="M83.0 572.0 H118.0" stroke="#111" stroke-width="1.5" stroke-dasharray="1.8 0.5 2.6 0.4 1.8 0.4 1.4 0.7 1.8 0.5 1.8 0.4 2.2 0.7 2.6 0.5 2.2 0.7 1.8 0.5 2.2 0.4 2.2 0.7 2.6 0.7 2.2 0.5" opacity="0.85" fill="none"/>
<path d="M83.0 574.4 H119.0" stroke="#111" stroke-width="1.5" stroke-dasharray="1.8 0.5 1.4 0.7 2.2 0.5 1.8 0.7 2.2 0.5 2.6 0.5 2.6 0.7 1.4 0.7 2.2 0.4 2.2 0.5 1.4 0.4 2.2 0.4 2.2 0.7 1.4 0.7 1.4 0.4" opacity="0.85" fill="none"/>
<rect x="80.0" y="568.1" width="1.0" height="1.4" fill="#223" opacity="0.85"/>
<rect x="80.0" y="573.7" width="1.0" height="1.4" fill="#223" opacity="0.85"/>
<rect x="76.3" y="578.2" width="1.0" height="1.5" fill="#111" opacity="0.85"/>
<path d="M79.0 579.0 H108.0" stroke="#111" stroke-width="1.9" stroke-dasharray="1.4 0.7 2.2 0.5 1.4 0.7 1.8 0.4 1.8 0.5 2.2 0.4 1.8 0.5 1.8 0.7 1.4 0.7 2.2 0.4 2.6 0.7 1.8 0.7" opacity="0.85" fill="none"/>
<path d="M76.0 585.0 H137.0" stroke="#111" stroke-width="1.5" stroke-dasharray="1.4 0.7 2.6 0.7 1.4 0.7 1.4 0.5 2.6 0.4 1.8 0.5 2.6 0.7 1.4 0.5 2.6 0.4 2.6 0.4 2.6 0.4 1.4 0.4 2.2 0.5 2.6 0.7 2.2 0.5 2.2 0.5 2.6 0.7 1.4 0.4 2.2 0.7 1.4 0.4 1.4 0.7 2.2 0.4 2.6 0.5 1.8 0.4" opacity="0.85" fill="none"/>
<rect x="79.3" y="589.2" width="62.7" height="10" fill="#ffee00"/>
<rect x="79.3" y="599" width="62.7" height="2.6" fill="#ffee00"/>
<rect x="79.3" y="601.6" width="11" height="2.2" fill="#ffee00"/>
<path d="M80.0 590.6 H142.0" stroke="#111" stroke-width="1.5" stroke-dasharray="1.8 0.7 2.6 0.7 1.8 0.5 1.4 0.7 2.2 0.5 2.6 0.7 1.8 0.5 2.6 0.5 2.6 0.5 1.4 0.5 2.2 0.5 2.6 0.5 2.2 0.7 2.2 0.7 2.2 0.4 2.6 0.4 2.2 0.4 2.2 0.7 2.2 0.4 1.4 0.4 2.6 0.7 2.6 0.7 1.4 0.5" opacity="0.85" fill="none"/>
<path d="M80.0 593.0 H118.0" stroke="#111" stroke-width="1.5" stroke-dasharray="2.2 0.4 1.4 0.4 1.8 0.5 1.4 0.7 2.6 0.7 1.8 0.7 1.4 0.4 1.4 0.7 2.6 0.7 1.8 0.4 1.8 0.4 2.6 0.4 1.4 0.5 1.8 0.5 2.2 0.5 1.8 0.5" opacity="0.85" fill="none"/>
<path d="M80.0 595.3 H142.0" stroke="#111" stroke-width="1.5" stroke-dasharray="1.4 0.5 1.4 0.5 1.4 0.5 1.4 0.4 2.6 0.7 2.6 0.5 1.4 0.4 2.6 0.7 1.8 0.5 2.6 0.7 1.4 0.4 2.6 0.4 1.8 0.7 1.4 0.5 1.4 0.4 1.4 0.4 1.8 0.4 1.8 0.5 1.4 0.5 1.8 0.5 1.8 0.4 2.2 0.7 1.8 0.7 1.4 0.5 2.6 0.5 2.2 0.4 1.4 0.4" opacity="0.85" fill="none"/>
<path d="M80.0 597.8 H97.0" stroke="#111" stroke-width="1.5" stroke-dasharray="1.4 0.4 1.4 0.5 2.2 0.5 1.8 0.5 1.4 0.5 2.2 0.7 2.6 0.5 1.8 0.4" opacity="0.85" fill="none"/>
<path d="M80.0 600.4 H142.0" stroke="#111" stroke-width="1.5" stroke-dasharray="1.4 0.5 1.8 0.7 2.6 0.5 2.6 0.5 2.2 0.7 2.2 0.5 2.2 0.4 2.2 0.7 1.4 0.4 2.2 0.7 2.6 0.4 2.6 0.5 2.6 0.7 1.8 0.5 2.2 0.7 1.4 0.5 2.2 0.5 2.6 0.4 1.4 0.5 1.8 0.7 1.8 0.5 2.6 0.5 1.4 0.7 2.6 0.5" opacity="0.85" fill="none"/>
<path d="M80.0 602.8 H90.0" stroke="#111" stroke-width="1.5" stroke-dasharray="1.8 0.7 1.8 0.5 1.4 0.7 2.6 0.5" opacity="0.85" fill="none"/>
<rect x="76.6" y="589.9" width="1.0" height="1.4" fill="#223" opacity="0.85"/>
<rect x="76.6" y="594.6" width="1.0" height="1.4" fill="#223" opacity="0.85"/>
<rect x="76.6" y="599.7" width="1.0" height="1.4" fill="#223" opacity="0.85"/>
<rect x="76.3" y="606.8" width="1.0" height="1.5" fill="#111" opacity="0.85"/>
<path d="M79.0 607.5 H97.0" stroke="#111" stroke-width="1.9" stroke-dasharray="1.8 0.5 1.4 0.5 2.6 0.7 1.4 0.7 2.2 0.4 1.8 0.5 2.2 0.7 2.2 0.5" opacity="0.85" fill="none"/>
<path d="M76.0 612.5 H83.0" stroke="#111" stroke-width="1.5" stroke-dasharray="1.8 0.4 1.8 0.4 1.4 0.4 2.2 0.5" opacity="0.85" fill="none"/>
<rect x="83.0" y="611.4" width="13.0" height="2.2" fill="#e00" opacity="1"/>
<path d="M76.0 618.0 H85.0" stroke="#111" stroke-width="1.9" stroke-dasharray="2.2 0.5 1.8 0.4 1.4 0.5 2.2 0.4" opacity="0.85" fill="none"/>
<path d="M76.0 624.0 H142.0" stroke="#111" stroke-width="1.5" stroke-dasharray="2.2 0.7 2.6 0.4 1.8 0.5 1.4 0.5 2.2 0.7 1.4 0.4 1.4 0.4 2.6 0.7 1.8 0.5 2.2 0.5 1.4 0.5 1.8 0.5 1.4 0.5 1.8 0.4 2.6 0.4 1.4 0.4 1.4 0.7 2.2 0.7 2.6 0.5 1.4 0.7 2.6 0.4 1.4 0.5 2.2 0.7 1.8 0.7 1.4 0.7 2.6 0.4 2.6 0.4" opacity="0.85" fill="none"/>
<path d="M76.0 626.4 H122.0" stroke="#111" stroke-width="1.5" stroke-dasharray="2.2 0.4 1.8 0.4 1.4 0.5 2.2 0.4 1.4 0.4 2.2 0.7 2.6 0.4 1.4 0.4 2.2 0.4 1.8 0.7 2.2 0.7 2.6 0.7 1.4 0.5 2.2 0.5 2.2 0.5 1.4 0.5 2.6 0.5 1.8 0.5 1.8 0.4" opacity="0.85" fill="none"/>
<path d="M76.0 631.3 H86.0" stroke="#111" stroke-width="1.5" stroke-dasharray="1.4 0.5 1.8 0.4 1.8 0.4 1.4 0.7 2.2 0.7" opacity="0.85" fill="none"/>
<path d="M80.0 635.2 H137.0" stroke="#111" stroke-width="1.5" stroke-dasharray="1.8 0.5 1.4 0.5 1.4 0.7 1.4 0.5 2.2 0.5 1.8 0.5 1.4 0.7 2.2 0.4 2.2 0.4 1.4 0.4 2.6 0.7 1.8 0.5 1.8 0.5 2.6 0.5 1.8 0.4 1.4 0.5 2.2 0.5 1.8 0.5 2.6 0.4 2.2 0.5 2.6 0.4 1.8 0.7 1.4 0.7 1.8 0.7" opacity="0.85" fill="none"/>
<path d="M80.0 637.8 H142.0" stroke="#111" stroke-width="1.5" stroke-dasharray="2.6 0.5 1.4 0.5 1.8 0.5 2.6 0.5 1.8 0.4 1.4 0.5 2.2 0.5 1.8 0.4 2.2 0.4 1.4 0.5 2.2 0.7 1.8 0.5 1.4 0.7 2.2 0.4 2.2 0.5 1.4 0.5 1.8 0.5 1.8 0.4 1.8 0.7 1.8 0.7 1.8 0.4 1.4 0.4 2.6 0.5 1.8 0.4 1.8 0.7 1.8 0.7" opacity="0.85" fill="none"/>
<path d="M80.0 640.0 H90.0" stroke="#111" stroke-width="1.5" stroke-dasharray="2.2 0.4 1.4 0.4 2.6 0.7 1.4 0.7 2.2 0.5" opacity="0.85" fill="none"/>
<rect x="77.3" y="634.5" width="1.0" height="1.4" fill="#223" opacity="0.85"/>
<rect x="77.3" y="637.1" width="1.0" height="1.4" fill="#223" opacity="0.85"/>
<path d="M103.0 645.2 H115.0" stroke="#111" stroke-width="1.6" stroke-dasharray="2.2 0.7 2.6 0.4 1.4 0.5 2.6 0.4 2.2 0.4" opacity="0.85" fill="none"/>
<rect x="75.6" y="648.4" width="67.2" height="23.4" fill="#fff" stroke="#000" stroke-width="1"/>
<rect x="75.6" y="648.4" width="67.2" height="3.2" fill="#222"/>
<rect x="75.6" y="651.55" width="67.2" height="0.9" fill="#000"/>
<rect x="75.6" y="655.15" width="67.2" height="0.9" fill="#000"/>
<rect x="75.6" y="660.75" width="67.2" height="0.9" fill="#000"/>
<rect x="75.6" y="664.15" width="67.2" height="0.9" fill="#000"/>
<rect x="75.6" y="667.75" width="67.2" height="0.9" fill="#000"/>
<rect x="79.14999999999999" y="648.4" width="0.9" height="23.4" fill="#000"/>
<rect x="90.55" y="648.4" width="0.9" height="23.4" fill="#000"/>
<path d="M92.0 653.8 H128.0" stroke="#111" stroke-width="1.7" stroke-dasharray="1.8 0.7 2.2 0.4 1.8 0.7 2.2 0.7 1.4 0.5 2.6 0.7 1.4 0.4 2.2 0.7 1.8 0.5 2.6 0.7 1.4 0.5 1.4 0.7 2.6 0.5 1.4 0.7 1.8 0.4" opacity="0.9" fill="none"/>
<path d="M92.0 657.2 H130.0" stroke="#111" stroke-width="1.7" stroke-dasharray="1.8 0.4 1.8 0.7 1.8 0.4 1.4 0.5 2.2 0.7 1.4 0.4 1.4 0.7 1.8 0.5 1.4 0.7 2.6 0.7 1.8 0.7 2.6 0.4 2.2 0.4 1.8 0.4 2.2 0.4 2.6 0.5" opacity="0.9" fill="none"/>
<path d="M92.0 659.4 H110.0" stroke="#111" stroke-width="1.7" stroke-dasharray="2.2 0.4 1.4 0.4 2.6 0.4 1.8 0.4 1.8 0.7 2.6 0.7 2.6 0.4" opacity="0.9" fill="none"/>
<path d="M92.0 663.0 H132.0" stroke="#111" stroke-width="1.7" stroke-dasharray="1.4 0.7 2.6 0.7 2.6 0.7 1.4 0.5 1.4 0.5 2.2 0.5 1.8 0.5 2.6 0.7 2.2 0.5 1.4 0.5 1.8 0.7 2.2 0.4 2.6 0.7 1.4 0.5 1.4 0.7 1.8 0.4" opacity="0.9" fill="none"/>
<path d="M92.0 666.4 H105.0" stroke="#111" stroke-width="1.7" stroke-dasharray="2.2 0.5 1.8 0.7 1.4 0.4 1.8 0.5 2.6 0.5 1.4 0.4" opacity="0.9" fill="none"/>
<path d="M92.0 670.0 H103.0" stroke="#111" stroke-width="1.7" stroke-dasharray="1.4 0.7 2.2 0.7 2.2 0.7 1.4 0.7 1.4 0.5" opacity="0.9" fill="none"/>
<path d="M80.6 653.8 H90.0" stroke="#111" stroke-width="1.8" stroke-dasharray="1.4 0.7 1.4 0.5 1.8 0.4 2.2 0.4 2.2 0.5" opacity="0.9" fill="none"/>
<path d="M80.6 658.4 H90.0" stroke="#111" stroke-width="1.8" stroke-dasharray="1.8 0.4 1.4 0.7 2.2 0.4 2.6 0.7" opacity="0.9" fill="none"/>
<path d="M80.6 663.0 H90.0" stroke="#111" stroke-width="1.8" stroke-dasharray="1.8 0.5 1.4 0.7 1.8 0.5 2.6 0.7" opacity="0.9" fill="none"/>
<path d="M80.6 666.4 H90.0" stroke="#111" stroke-width="1.8" stroke-dasharray="2.2 0.5 1.8 0.7 1.4 0.7 2.2 0.5" opacity="0.9" fill="none"/>
<path d="M80.6 670.0 H90.0" stroke="#111" stroke-width="1.8" stroke-dasharray="1.8 0.7 2.6 0.4 2.2 0.5 2.2 0.7" opacity="0.9" fill="none"/>
<rect x="139.0" y="676.5" width="3.0" height="1.5" fill="#111" opacity="0.85"/></svg>
<div id="pop">
  <div style="left:10.5px;top:12px;font-size:12px;line-height:16px;color:#932d91">清除</div>
  <div style="left:0;top:39px;width:90px;height:1px;background:#dcdcdc"></div>
  <div style="left:12px;top:50px;font-size:14.3px;line-height:20px;color:#2a2a2a;letter-spacing:0.9px;font-weight:300">发现表单域</div>
  <div style="left:11.5px;top:77px;font-size:12px;line-height:16px;color:#222;font-weight:300;letter-spacing:0.3px">该文档包含交互式表单域。</div>
  <div style="left:12.5px;top:103px;width:13px;height:13px;border:1px solid #c6c6c6;background:#f9f9f9"></div>
  <div style="left:28px;top:102px;font-size:12px;line-height:16px;color:#666;font-weight:300">不再显示该消息</div>
</div>
<div id="lborder"></div>
</body>
</html>
